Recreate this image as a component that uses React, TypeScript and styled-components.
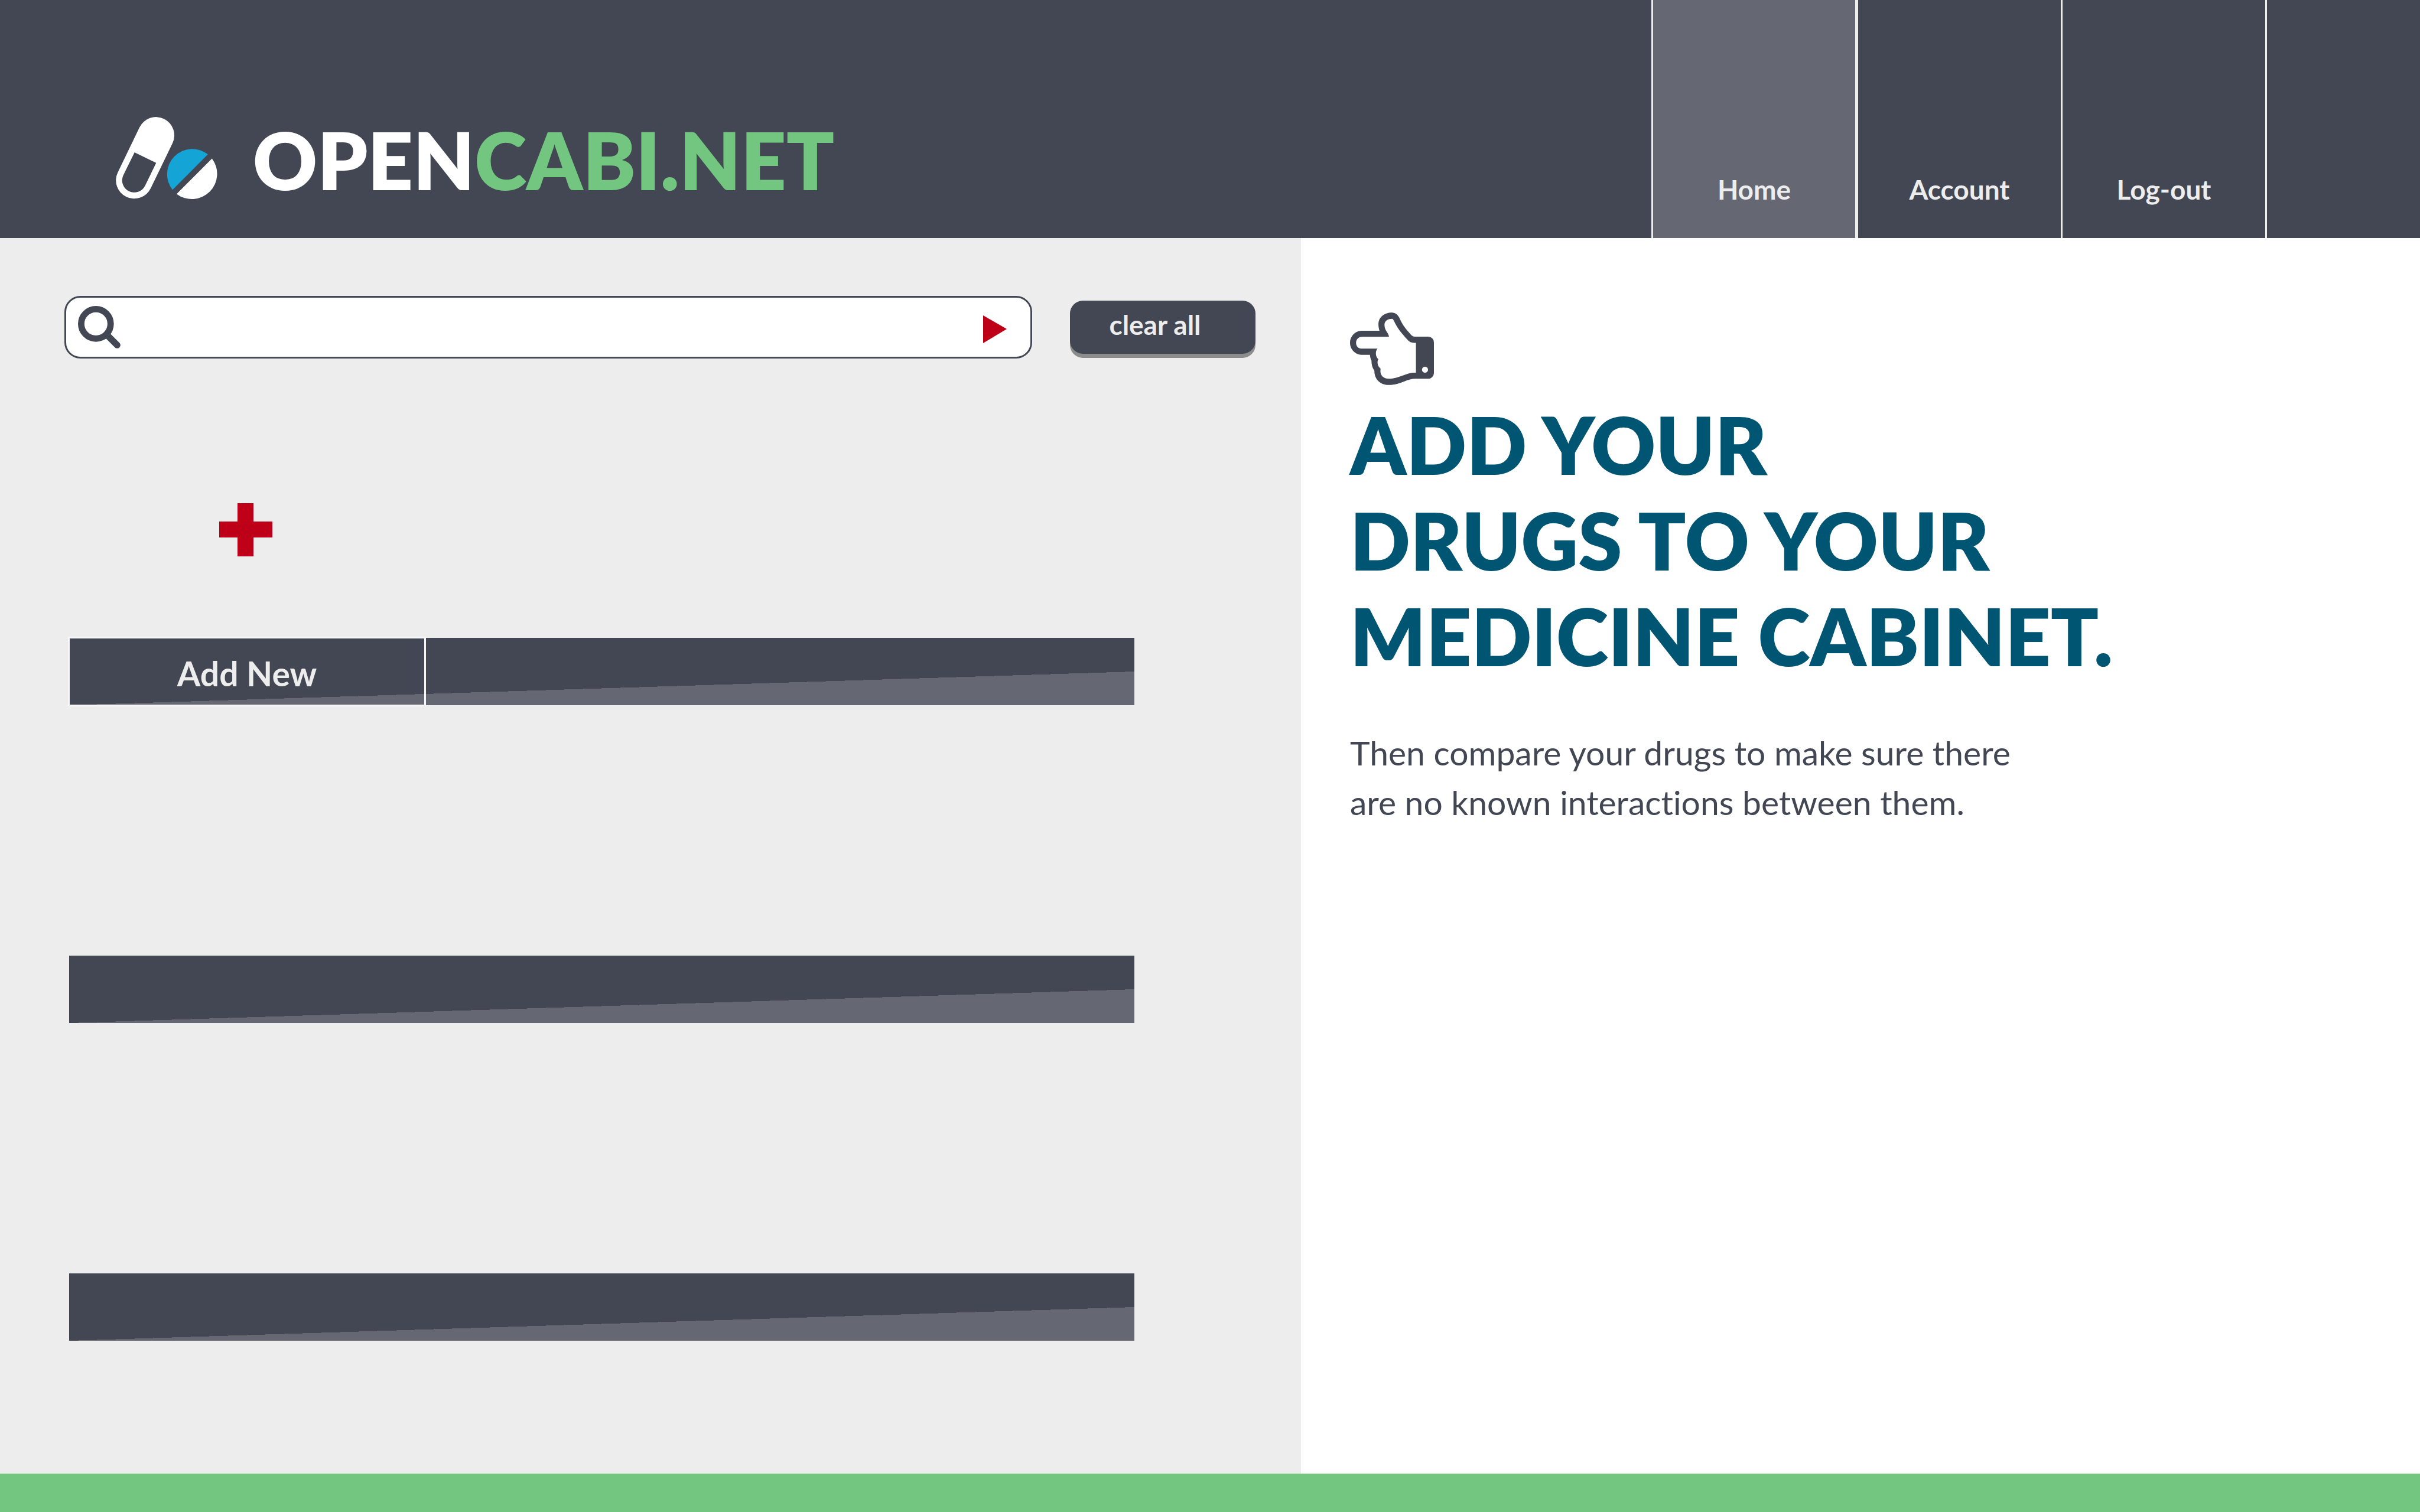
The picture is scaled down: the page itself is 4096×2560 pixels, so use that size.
import React from "react";
import styled, { createGlobalStyle } from "styled-components";

const color = {
  slate: "#424753",
  slateLight: "#656872",
  paper: "#ededed",
  white: "#ffffff",
  green: "#72c680",
  red: "#bd0018",
  blue: "#14a4d6",
  teal: "#005573",
};

const GlobalStyle = createGlobalStyle`
  *, *::before, *::after { box-sizing: border-box; }
  body {
    margin: 0;
    font-family: Lato, "Open Sans", sans-serif;
    font-variant-ligatures: none;
    color: ${color.slate};
    background: ${color.white};
  }
  button, input { font: inherit; }
`;

const Page = styled.div`
  min-height: 100vh;
  display: grid;
  grid-template-rows: auto 1fr auto;
`;

const Header = styled.header`
  display: flex;
  justify-content: space-between;
  background: ${color.slate};
`;

const Brand = styled.a`
  display: flex;
  align-items: flex-end;
  gap: 60px;
  padding: 198px 0 65px 196px;
  text-decoration: none;
`;

const BrandMark = styled.svg`
  width: 172px;
  height: 140px;
`;

const BrandName = styled.span`
  font-size: 134px;
  line-height: 134px;
  font-weight: 800;
  color: ${color.white};
`;

const BrandAccent = styled.span`
  color: ${color.green};
`;

const Nav = styled.nav`
  display: flex;
  padding-right: 259px;
  border-left: 3px solid ${color.paper};
`;

const NavLink = styled.a<{ $active?: boolean }>`
  width: ${(p) => (p.$active ? 347 : 346)}px;
  display: flex;
  justify-content: center;
  align-items: flex-end;
  padding-bottom: 55px;
  border-right: ${(p) => (p.$active ? 5 : 3)}px solid ${color.paper};
  background: ${(p) => (p.$active ? color.slateLight : "transparent")};
  color: ${color.paper};
  font-size: 46px;
  line-height: 54px;
  font-weight: 700;
  text-decoration: none;
`;

const Main = styled.main`
  display: grid;
  grid-template-columns: 2202fr 1894fr;
`;

const Cabinet = styled.section`
  background: ${color.paper};
  padding: 98px 77px 0 109px;
`;

const SearchForm = styled.form`
  display: flex;
  align-items: center;
  gap: 64px;
`;

const SearchBox = styled.div`
  flex: 1;
  height: 106px;
  display: flex;
  align-items: center;
  gap: 24px;
  padding: 0 40px 0 20px;
  border: 3px solid ${color.slate};
  border-radius: 27px;
  background: ${color.white};
`;

const SearchIcon = styled.svg`
  width: 72px;
  height: 72px;
  flex: none;
`;

const SearchInput = styled.input`
  flex: 1;
  min-width: 0;
  height: 80px;
  border: 0;
  outline: 0;
  background: transparent;
  color: ${color.slate};
  font-size: 46px;
`;

const PlainButton = styled.button`
  display: flex;
  padding: 0;
  border: 0;
  background: transparent;
  cursor: pointer;
`;

const Arrow = styled.svg`
  width: 40px;
  height: 54px;
`;

const ClearButton = styled.button`
  width: 314px;
  height: 90px;
  padding: 0 26px 8px 0;
  border: 0;
  border-radius: 22px;
  background: ${color.slate};
  box-shadow: 0 7px 0 #8c8c8c;
  color: ${color.paper};
  font-size: 46px;
  line-height: 54px;
  font-weight: 700;
  cursor: pointer;
`;

const AddSlot = styled.div`
  display: flex;
  padding: 245px 0 138px 262px;
`;

const Plus = styled.svg`
  width: 90px;
  height: 90px;
`;

const Shelves = styled.div`
  display: grid;
  gap: 424px;
  padding: 0 205px 223px 8px;
`;

const Shelf = styled.div`
  height: 114px;
  display: flex;
  background: linear-gradient(
    to bottom right,
    ${color.slate} 50%,
    ${color.slateLight} 50%
  ) bottom / 100% 50% no-repeat ${color.slate};
`;

const AddNewButton = styled.button`
  width: 602px;
  padding: 6px 0 0;
  border: 0;
  outline: 3px solid #f7f7f7;
  outline-offset: -1px;
  background: transparent;
  color: ${color.paper};
  font-size: 57px;
  line-height: 70px;
  font-weight: 700;
  cursor: pointer;
`;

const Intro = styled.section`
  padding: 126px 83px 0;
`;

const Hand = styled.svg`
  display: block;
  width: 142px;
  height: 123px;
`;

const Title = styled.h1`
  margin: 20px 0 0;
  color: ${color.teal};
  font-size: 134px;
  line-height: 162px;
  font-weight: 800;
`;

const Lead = styled.p`
  margin: 74px 0 0;
  font-size: 57px;
  line-height: 84px;
`;

const Footer = styled.footer`
  height: 65px;
  background: ${color.green};
`;

export default function App() {
  return (
    <Page>
      <GlobalStyle />
      <Header>
        <Brand href="#">
          <BrandMark viewBox="75 81 672 546" aria-hidden="true">
            <line x1="341" y1="202" x2="197" y2="500" stroke={color.white} strokeWidth="242" strokeLinecap="round" />
            <path d="M199 315 L342 384 L269 535 A80 80 0 0 1 125 465 Z" fill={color.slate} />
            <path d="M684 328 A167 167 0 0 0 450 563 Z" fill={color.blue} />
            <path d="M711 356 A167 167 0 0 1 477 590 Z" fill={color.white} />
          </BrandMark>
          <BrandName>
            OPEN<BrandAccent>CABI.NET</BrandAccent>
          </BrandName>
        </Brand>
        <Nav>
          <NavLink href="#home" $active>Home</NavLink>
          <NavLink href="#account">Account</NavLink>
          <NavLink href="#logout">Log-out</NavLink>
        </Nav>
      </Header>
      <Main>
        <Cabinet>
          <SearchForm onSubmit={(e) => e.preventDefault()}>
            <SearchBox>
              <SearchIcon viewBox="156 129 280 280" aria-hidden="true">
                <circle cx="274" cy="247" r="97" fill="none" stroke={color.slate} strokeWidth="42" />
                <line x1="350" y1="323" x2="414" y2="387" stroke={color.slate} strokeWidth="43" strokeLinecap="round" />
              </SearchIcon>
              <SearchInput type="text" aria-label="Search drugs" />
              <PlainButton type="submit" aria-label="Search">
                <Arrow viewBox="0 0 40 54" aria-hidden="true">
                  <path d="M0 7 L40 30 L0 54 Z" fill={color.red} />
                </Arrow>
              </PlainButton>
            </SearchBox>
            <ClearButton type="button">clear all</ClearButton>
          </SearchForm>
          <AddSlot>
            <PlainButton type="button" aria-label="Add drug">
              <Plus viewBox="0 0 90 90" aria-hidden="true">
                <path d="M31 0 H58 V31 H90 V58 H58 V90 H31 V58 H0 V31 H31 Z" fill={color.red} />
              </Plus>
            </PlainButton>
          </AddSlot>
          <Shelves>
            <Shelf>
              <AddNewButton type="button">Add New</AddNewButton>
            </Shelf>
            <Shelf />
            <Shelf />
          </Shelves>
        </Cabinet>
        <Intro>
          <Hand viewBox="105 57 555 479" aria-hidden="true">
            <path
              fillRule="evenodd"
              fill={color.slate}
              d="M105 257 C105 213 140 177 183 177 H300 C296 165 293 150 293 136 C293 88 330 57 383 57 C405 57 422 72 433 95 C441 112 452 135 465 152 C480 172 500 195 511 207 C518 214 524 216 532 216 H622 A38 38 0 0 1 660 254 V457 A38 38 0 0 1 622 495 H535 C515 495 490 502 465 512 C435 523 400 536 362 536 C305 536 266 500 266 441 C254 425 247 405 247 374 C241 364 237 350 237 337 H183 C140 337 105 301 105 257 Z
              M145 257 C145 235 160 217 185 217 H363 C361 203 352 190 345 179 C338 168 333 155 333 138 C333 115 350 98 384 98 C390 99 393 107 397 115 C405 132 417 155 432 174 C450 197 470 221 488 240 C497 250 510 257 528 257 H541 V455 H530 C508 455 488 461 466 469 C435 480 395 495 362 495 C325 495 306 472 306 445 L307 427 C295 418 287 405 287 388 C287 378 289 371 293 366 C283 359 276 345 276 328 C276 316 280 303 287 296 H185 C160 296 145 280 145 257 Z
              M581 435 A20 20 0 0 0 621 435 A20 20 0 0 0 581 435 Z"
            />
          </Hand>
          <Title>
            ADD YOUR
            <br />
            DRUGS TO YOUR
            <br />
            MEDICINE CABINET.
          </Title>
          <Lead>
            Then compare your drugs to make sure there
            <br />
            are no known interactions between them.
          </Lead>
        </Intro>
      </Main>
      <Footer />
    </Page>
  );
}
